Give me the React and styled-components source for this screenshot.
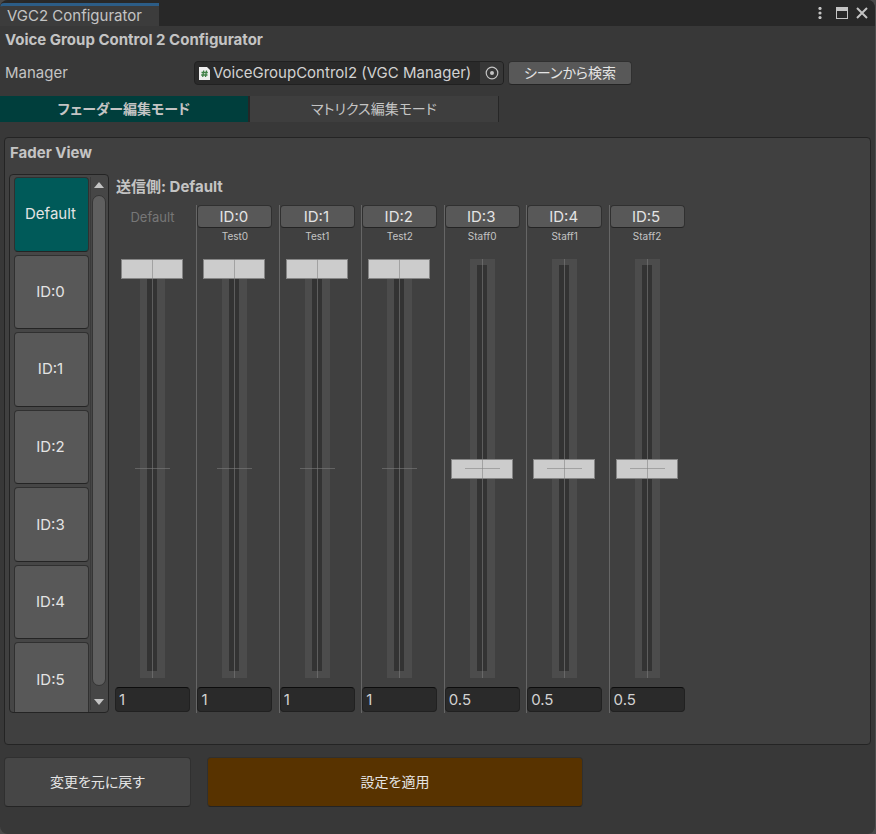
import React, { useState } from "react";
import styled, { createGlobalStyle } from "styled-components";

const GlobalStyle = createGlobalStyle`
  *, *::before, *::after { box-sizing: border-box; }
  body {
    margin: 0;
    background: #4a4a4a;
    color: #c4c4c4;
    font: 15px/20px Inter, "Noto Sans CJK JP", sans-serif;
    font-feature-settings: "palt";
  }
  button, input { font: inherit; font-feature-settings: inherit; color: inherit; margin: 0; }
  h1, h2 { margin: 0; font-size: 15px; line-height: 20px; font-weight: 700; }
`;

const Window = styled.main`
  display: flex;
  flex-direction: column;
  height: 100vh;
  min-height: 560px;
  padding-bottom: 27px;
  background: #383838;
  border-right: 1px solid #4e4e4e;
  border-radius: 8px;
  overflow: hidden;
`;

const TitleBar = styled.header`
  display: flex;
  justify-content: space-between;
  height: 26px;
  padding-top: 3px;
  background: #282828;
`;

const WindowTab = styled.div`
  padding: 0 17px 0 7px;
  line-height: 20px;
  border-top: 3px solid #2c5d87;
  border-top-left-radius: 4px;
  background: #3c3c3c;
`;

const WindowButtons = styled.div`
  display: flex;
  align-items: center;
  gap: 6px;
  padding: 0 6px 3px 0;
`;

const IconButton = styled.button`
  display: grid;
  place-items: center;
  width: ${(p) => p.$width || 14}px;
  height: 16px;
  padding: 0;
  border: 0;
  background: none;
`;

const Heading = styled.h1`
  padding: 0 5px;
  margin-top: 4px;
`;

const ManagerRow = styled.div`
  display: flex;
  align-items: center;
  gap: 4px;
  margin-top: 11px;
  padding: 0 5px;
`;

const FieldLabel = styled.label`
  width: 185px;
`;

const ObjectField = styled.div`
  display: flex;
  align-items: center;
  flex: 0 1 310px;
  height: 24px;
  padding-left: 4px;
  border: 1px solid #212121;
  border-radius: 4px;
  background: #2a2a2a;
  overflow: hidden;
`;

const ObjectInput = styled.input`
  flex: 1;
  min-width: 0;
  padding: 0 0 0 3px;
  border: 0;
  outline: 0;
  background: none;
  color: #d2d2d2;
`;

const PickerButton = styled(IconButton)`
  width: 23px;
  height: 100%;
  background: #373737;
`;

const Button = styled.button`
  padding: 0;
  border: 1px solid #303030;
  border-bottom-color: #242424;
  border-radius: 4px;
  background: #585858;
  color: #e4e4e4;
`;

const SearchButton = styled(Button)`
  width: 124px;
  height: 24px;
  font-size: 14px;
  line-height: 22px;
`;

const ModeTabs = styled.div`
  display: flex;
  margin-top: 11px;
`;

const ModeTab = styled.button`
  flex: 0 1 ${(p) => (p.$last ? 249 : 250)}px;
  height: 26px;
  padding: 0;
  border: 0;
  border-right: ${(p) => (p.$last ? 1 : 2)}px solid #262626;
  background: ${(p) => (p.$active ? "#003e3c" : "#3e3e3e")};
  color: #c4c4c4;
  font-size: 14px;
  font-weight: ${(p) => (p.$active ? 700 : 400)};
`;

const Panel = styled.section`
  display: flex;
  flex-direction: column;
  flex: 1;
  min-height: 0;
  margin: 15px 4px 0;
  padding: 5px 4px 31px;
  border: 1px solid #242424;
  border-radius: 4px;
  background: #404040;
`;

const PanelTitle = styled.h2`
  padding-left: 1px;
`;

const PanelBody = styled.div`
  display: flex;
  flex: 1;
  gap: 5px;
  min-height: 0;
  margin-top: 11px;
`;

const SenderBox = styled.div`
  display: flex;
  justify-content: space-between;
  width: 100px;
  padding: 2px 2px 2px 4px;
  border: 1px solid #242424;
  border-radius: 4px;
  background: #464646;
  overflow: hidden;
`;

const SenderList = styled.div`
  display: grid;
  grid-template-rows: repeat(7, 1fr);
  gap: 3px;
  width: 75px;
  height: 540px;
`;

const SenderButton = styled(Button)`
  padding-right: 2px;
  background: ${(p) => (p.$active ? "#005a59" : "#585858")};
`;

const Scrollbar = styled.div`
  display: flex;
  flex-direction: column;
  align-items: center;
  width: 16px;
  border-left: 1px solid #3a3a3a;
`;

const ScrollThumb = styled.div`
  flex: 1;
  width: 14px;
  margin: 2px 0 8px;
  border: 1px solid #353535;
  border-radius: 8px;
  background: #5f5f5f;
`;

const Mixer = styled.div`
  display: flex;
  flex-direction: column;
  flex: 0 1 577px;
  min-height: 0;
`;

const MixerTitle = styled.h2`
  margin: 3px 0 8px;
  padding-left: 2px;
`;

const Channels = styled.div`
  display: grid;
  grid-template-columns: repeat(7, 1fr);
  grid-template-rows: minmax(0, 1fr);
  flex: 1;
  min-height: 0;
`;

const Channel = styled.div`
  display: flex;
  flex-direction: column;
  align-items: center;
  width: 76px;
  min-height: 0;
  border-left: 1px solid ${(p) => (p.$first ? "transparent" : "#666")};
`;

const ChannelButton = styled(Button)`
  width: 75px;
  height: 23px;
  padding-right: 2px;
  line-height: 20px;
`;

const SelfLabel = styled.div`
  height: 23px;
  line-height: 24px;
  font-size: 13px;
  color: #777;
`;

const ChannelName = styled.div`
  height: 16px;
  font-size: 10px;
  line-height: 17px;
`;

const Fader = styled.div`
  position: relative;
  display: grid;
  grid-template-rows: minmax(0, 1fr);
  flex: 1;
  min-height: 0;
  width: 62px;
  margin: 15px 1px 9px 0;

  &::before, &::after {
    content: "";
    position: absolute;
    z-index: 1;
    background: rgba(128, 128, 128, 0.55);
    pointer-events: none;
  }
  &::before { left: 31px; top: 0; bottom: 0; width: 1px; }
  &::after { left: 14px; top: calc(50% - 1px); width: 35px; height: 1px; }
`;

const FaderInput = styled.input`
  appearance: none;
  display: block;
  width: 62px;
  min-height: 0;
  height: 100%;
  writing-mode: vertical-lr;
  direction: rtl;
  outline: 0;
  background:
    linear-gradient(#333, #333) 26px 6px / 10px calc(100% - 13px) no-repeat,
    linear-gradient(#4c4c4c, #4c4c4c) 19px 0 / 25px 100% no-repeat;

  &::-webkit-slider-thumb {
    appearance: none;
    width: 62px;
    height: 20px;
    border: 1px solid #858585;
    background: #ccc;
  }
`;

const ValueInput = styled.input`
  width: 75px;
  height: 25px;
  margin-bottom: 1px;
  padding: 0 3px;
  border: 1px solid #212121;
  border-top-color: #0d0d0d;
  border-radius: 4px;
  outline: 0;
  background: #2a2a2a;
  color: #d2d2d2;
`;

const Footer = styled.footer`
  display: flex;
  gap: 16px;
  padding: 12px 4px 0;
`;

const ActionButton = styled(Button)`
  flex: 0 1 ${(p) => (p.$primary ? 376 : 187)}px;
  height: 50px;
  font-size: 14px;
  background: ${(p) => (p.$primary ? "#583300" : "#464646")};
`;

const SENDERS = ["Default", "ID:0", "ID:1", "ID:2", "ID:3", "ID:4", "ID:5"];
const NAMES = ["", "Test0", "Test1", "Test2", "Staff0", "Staff1", "Staff2"];
const MODES = ["フェーダー編集モード", "マトリクス編集モード"];

const Arrow = ({ down }) => (
  <svg width="10" height="6" viewBox="0 0 10 6" fill="#c4c4c4">
    <path d={down ? "M0 0h10L5 6z" : "M0 6h10L5 0z"} />
  </svg>
);

export default function App() {
  const [mode, setMode] = useState(0);
  const [sender, setSender] = useState(0);
  const [values, setValues] = useState([1, 1, 1, 1, 0.5, 0.5, 0.5]);
  const change = (i, v) => setValues(values.map((old, k) => (k === i ? v : old)));

  return (
    <>
      <GlobalStyle />
      <Window>
        <TitleBar>
          <WindowTab>VGC2 Configurator</WindowTab>
          <WindowButtons>
            <IconButton aria-label="Menu" $width={18}>
              <svg width="4" height="12" viewBox="0 0 4 12" fill="#c4c4c4">
                <circle cx="2" cy="1.5" r="1.6" />
                <circle cx="2" cy="6" r="1.6" />
                <circle cx="2" cy="10.5" r="1.6" />
              </svg>
            </IconButton>
            <IconButton aria-label="Maximize">
              <svg width="12" height="12" viewBox="0 0 12 12" fill="#c4c4c4">
                <path fillRule="evenodd" d="M0 0h12v12H0zM1 4v7h10V4z" />
              </svg>
            </IconButton>
            <IconButton aria-label="Close">
              <svg width="12" height="12" viewBox="0 0 12 12" stroke="#c4c4c4" strokeWidth="2">
                <path d="M1 1l10 10M11 1L1 11" />
              </svg>
            </IconButton>
          </WindowButtons>
        </TitleBar>

        <Heading>Voice Group Control 2 Configurator</Heading>

        <ManagerRow>
          <FieldLabel htmlFor="manager">Manager</FieldLabel>
          <ObjectField>
            <svg width="11" height="13" viewBox="0 0 11 13">
              <path d="M0 0h8l3 3v10H0z" fill="#eee" />
              <path
                d="M4.7 3.5L3.7 10M7.5 3.5l-1 6.5M2.5 5.5h6.3M2.200 8h6.300"
                stroke="#3f7f46"
                strokeWidth="1.3"
                fill="none"
              />
            </svg>
            <ObjectInput id="manager" readOnly value="VoiceGroupControl2 (VGC Manager)" />
            <PickerButton aria-label="Select object">
              <svg width="14" height="14" viewBox="0 0 14 14">
                <circle cx="7" cy="7" r="5.8" fill="none" stroke="#c4c4c4" strokeWidth="1.2" />
                <circle cx="7" cy="7" r="2" fill="#c4c4c4" />
              </svg>
            </PickerButton>
          </ObjectField>
          <SearchButton>シーンから検索</SearchButton>
        </ManagerRow>

        <ModeTabs role="tablist">
          {MODES.map((label, i) => (
            <ModeTab
              key={label}
              role="tab"
              aria-selected={mode === i}
              $active={mode === i}
              $last={i === MODES.length - 1}
              onClick={() => setMode(i)}
            >
              {label}
            </ModeTab>
          ))}
        </ModeTabs>

        <Panel>
          <PanelTitle>Fader View</PanelTitle>
          <PanelBody>
            <SenderBox>
              <SenderList>
                {SENDERS.map((s, i) => (
                  <SenderButton key={s} $active={sender === i} onClick={() => setSender(i)}>
                    {s}
                  </SenderButton>
                ))}
              </SenderList>
              <Scrollbar>
                <IconButton aria-label="Scroll up"><Arrow /></IconButton>
                <ScrollThumb />
                <IconButton aria-label="Scroll down"><Arrow down /></IconButton>
              </Scrollbar>
            </SenderBox>
            <Mixer>
              <MixerTitle>送信側: {SENDERS[sender]}</MixerTitle>
              <Channels>
                {SENDERS.map((s, i) => (
                  <Channel key={s} $first={i === 0}>
                    {i === 0 ? <SelfLabel>{s}</SelfLabel> : <ChannelButton>{s}</ChannelButton>}
                    <ChannelName>{NAMES[i]}</ChannelName>
                    <Fader>
                      <FaderInput
                        type="range"
                        min="0"
                        max="1"
                        step="0.01"
                        aria-label={`${s} fader`}
                        value={Number(values[i]) || 0}
                        onChange={(e) => change(i, e.target.value)}
                      />
                    </Fader>
                    <ValueInput
                      inputMode="decimal"
                      aria-label={`${s} value`}
                      value={values[i]}
                      onChange={(e) => change(i, e.target.value)}
                    />
                  </Channel>
                ))}
              </Channels>
            </Mixer>
          </PanelBody>
        </Panel>

        <Footer>
          <ActionButton>変更を元に戻す</ActionButton>
          <ActionButton $primary>設定を適用</ActionButton>
        </Footer>
      </Window>
    </>
  );
}
